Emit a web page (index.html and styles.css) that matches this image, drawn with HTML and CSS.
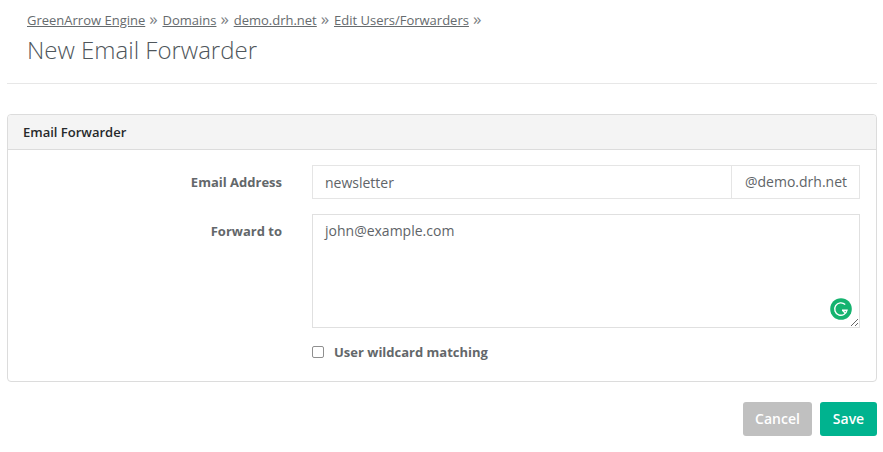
FILE: index.html
```html
<!DOCTYPE html>
<html lang="en">
<head>
    <meta charset="UTF-8">
    <meta name="viewport" content="width=device-width, initial-scale=1.0">
    <title>New Email Forwarder</title>
    <link rel="stylesheet" href="styles.css">
</head>
<body>
    <header class="page-header">
        <nav class="breadcrumbs">
            <a href="#">GreenArrow Engine</a><span class="sep">»</span>
            <a href="#">Domains</a><span class="sep">»</span>
            <a href="#">demo.drh.net</a><span class="sep">»</span>
            <a href="#">Edit Users/Forwarders</a><span class="sep">»</span>
        </nav>
        <h1>New Email Forwarder</h1>
    </header>

    <form class="panel">
        <div class="panel-heading">Email Forwarder</div>
        <div class="panel-body">
            <div class="form-row">
                <label class="row-label">Email Address</label>
                <div class="input-group">
                    <input class="text-input" type="text" value="newsletter">
                    <span class="input-addon">@demo.drh.net</span>
                </div>
            </div>
            <div class="form-row textarea-row">
                <label class="row-label">Forward to</label>
                <div class="textarea-wrap">
                    <textarea class="text-area">john@example.com</textarea>
                    <svg class="grammarly" width="22" height="22" viewBox="0 0 22 22">
                        <circle cx="11" cy="11" r="10.8" fill="#15b36f"/>
                        <path d="M15.2 6.6A6.2 6.2 0 1 0 17 12.2H12" fill="none" stroke="#fff" stroke-width="1.4"/>
                        <path d="M12.4 12.2l2.6 2.6" fill="none" stroke="#fff" stroke-width="1.4"/>
                    </svg>
                </div>
            </div>
            <div class="check-row">
                <input class="check" type="checkbox" id="wildcard">
                <label for="wildcard">User wildcard matching</label>
            </div>
        </div>
    </form>

    <div class="actions">
        <button class="btn btn-cancel" type="button">Cancel</button>
        <button class="btn btn-save" type="submit">Save</button>
    </div>
</body>
</html>
```

FILE: styles.css
```css
* {
    box-sizing: border-box;
}

body {
    font-family: "Open Sans", sans-serif;
    margin: 0;
    padding: 0 6px 0 7px;
    background: #fff;
    color: #606468;
}

.page-header {
    padding: 10px 20px 17px;
    height: 84px;
    border-bottom: 1px solid #e7e7e7;
}

.breadcrumbs {
    font-size: 13px;
    line-height: 18px;
    white-space: nowrap;
}

.breadcrumbs a {
    color: #666b6e;
}

.sep {
    margin: 0 1.4px 0 4px;
    color: #7d8184;
    font-size: 17px;
}

h1 {
    margin: 5px 0 0;
    font-size: 24px;
    font-weight: 300;
    line-height: 32px;
    color: #4f565b;
}

.panel {
    margin-top: 30px;
    height: 268px;
    border: 1px solid #dcdcdc;
    border-radius: 4px;
}

.panel-heading {
    height: 35px;
    padding: 0 15px;
    font-size: 13px;
    font-weight: 600;
    line-height: 34px;
    color: #26292b;
    background: #f4f4f4;
    border-bottom: 1px solid #dcdcdc;
    border-radius: 4px 4px 0 0;
}

.panel-body {
    padding: 15px 16px 0 0;
}

.form-row {
    display: flex;
    gap: 30px;
    margin-bottom: 15px;
}

.row-label {
    width: 274px;
    padding-top: 8px;
    text-align: right;
    font-size: 13px;
    font-weight: 700;
    line-height: 18px;
    color: #63676a;
}

.input-group {
    flex: 1;
    display: flex;
    height: 34px;
}

.text-input {
    flex: 1;
    min-width: 0;
    padding: 0 12px;
    font-family: inherit;
    font-size: 14px;
    color: #606468;
    border: 1px solid #e5e5e5;
    outline: none;
}

.input-addon {
    width: 128px;
    padding-left: 13px;
    font-size: 14px;
    line-height: 32px;
    border: 1px solid #e5e5e5;
    border-left: none;
}

.textarea-wrap {
    flex: 1;
    position: relative;
    height: 114px;
}

.text-area {
    display: block;
    width: 100%;
    height: 100%;
    padding: 6px 12px;
    font-family: inherit;
    font-size: 14px;
    line-height: 20px;
    color: #606468;
    border: 1px solid #e0e0e0;
    outline: none;
}

.grammarly {
    position: absolute;
    right: 8px;
    bottom: 8px;
}

.check-row {
    display: flex;
    align-items: center;
    margin: 0 0 0 304px;
    font-size: 13px;
    font-weight: 700;
    line-height: 18px;
    color: #63676a;
}

.check {
    appearance: none;
    width: 12px;
    height: 12px;
    margin: 0 10px 0 0;
    background: #fff;
    border: 1px solid #8f8f8f;
    border-radius: 2px;
}

.actions {
    display: flex;
    justify-content: flex-end;
    gap: 8px;
    margin-top: 20px;
}

.btn {
    height: 34px;
    padding: 0 0 2px;
    border: none;
    border-radius: 3px;
    font-family: inherit;
    font-size: 14px;
    font-weight: 600;
    color: #fff;
}

.btn-cancel {
    width: 69px;
    background: #c0c0c0;
}

.btn-save {
    width: 57px;
    background: #00b38f;
}
```
